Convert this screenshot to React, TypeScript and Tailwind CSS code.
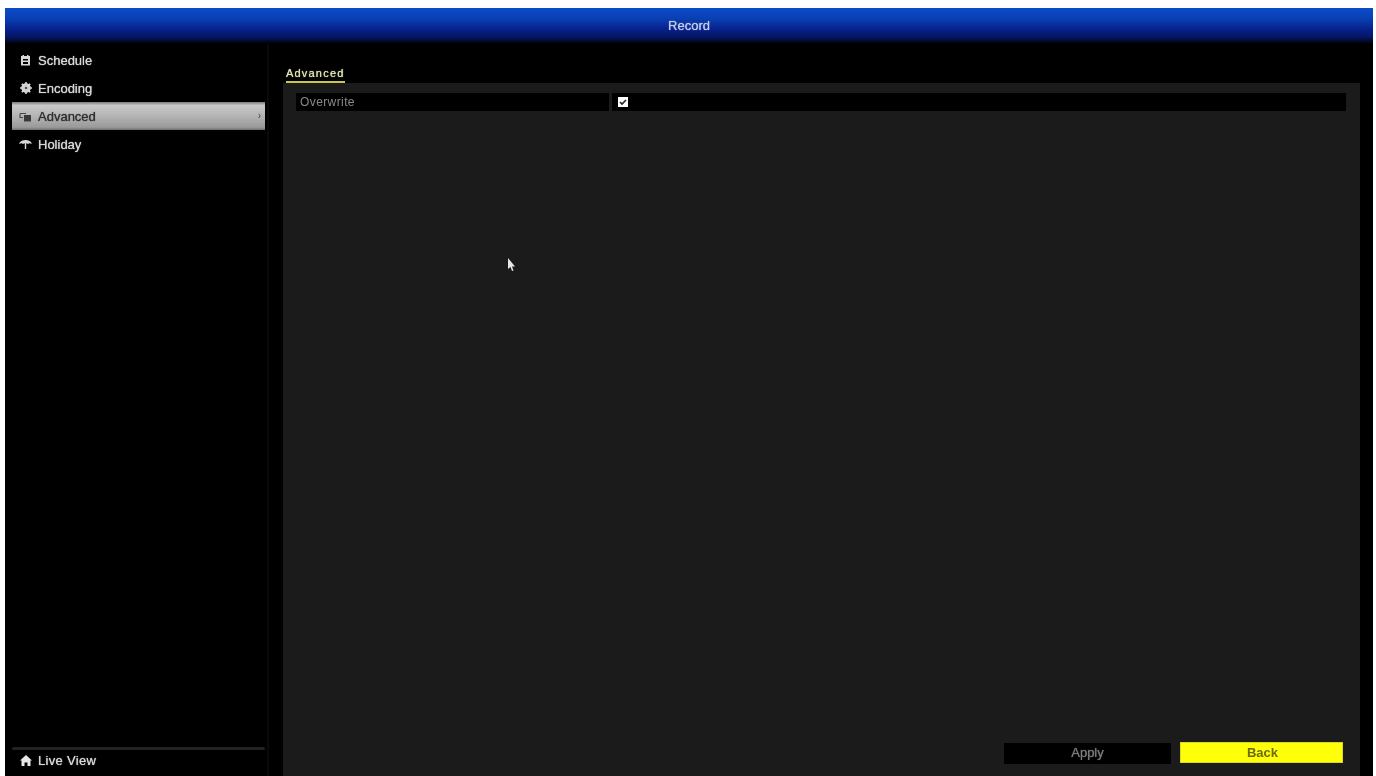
import React from "react";

const Cal = () => (
  <svg width="11" height="11" viewBox="0 0 11 11" className="shrink-0"><path fill="#d8d8d8" fillRule="evenodd" d="M1 1h1.500V0h1.500v1h3V0h1.500v1H10v9.500H1zM3 4v1.500h5V4zM3 7v2h5V7z" /></svg>
);
const Gear = () => (
  <svg width="12" height="12" viewBox="0 0 12 12" className="shrink-0"><circle cx="6" cy="6" r="3.600" fill="none" stroke="#d8d8d8" strokeWidth="2.400" /><path stroke="#d8d8d8" strokeWidth="1.600" d="M6 0v12M0 6h12M1.800 1.800l8.400 8.400M10.200 1.800l-8.400 8.400" /><circle cx="6" cy="6" r="1.300" fill="#555" /></svg>
);
const Adv = () => (
  <svg width="14" height="11" viewBox="0 0 14 11" className="shrink-0"><path fill="none" stroke="#4a4a4a" strokeWidth="1.200" d="M1 2.500h6M1 2.500v4h3" /><rect x="5" y="4" width="7" height="6.500" fill="#3a3a3a" /></svg>
);
const Umb = () => (
  <svg width="13" height="11" viewBox="0 0 13 11" className="shrink-0"><path fill="#d8d8d8" d="M0 5C1 2 3.500 1 6.500 1S12 2 13 5C11 4 10 4 9 5 8 4 5 4 4 5 3 4 2 4 0 5z" /><path stroke="#d8d8d8" strokeWidth="1.400" d="M6.500 4v6" /></svg>
);
const Home = () => (
  <svg width="12" height="11" viewBox="0 0 12 11" className="shrink-0"><path fill="#e8e8e8" d="M6 0l6 5.500h-1.500V11H7.500V7.500h-3V11h-3V5.500H0z" /></svg>
);

const items = [
  { label: "Schedule", icon: <Cal />, h: "h-[28px]" },
  { label: "Encoding", icon: <Gear />, h: "h-[28px]" },
  { label: "Advanced", icon: <Adv />, active: true, h: "h-[28px]" },
  { label: "Holiday", icon: <Umb />, h: "h-[29px]" },
];

export default function App() {
  return (
    <div className="h-[776px] w-[1376px] overflow-hidden bg-white pt-2 pl-[5px] pr-[3px] font-['Liberation_Sans',Arial,sans-serif] blur-[0.6px]">
      <div className="relative flex h-[768px] flex-col bg-black">
        <div className="flex h-[36px] shrink-0 items-center justify-center bg-[linear-gradient(to_bottom,#0b4ccb_0%,#0a3fb2_30%,#06208a_60%,#041560_82%,#000_100%)] text-[13px] text-[#c4cce8] [text-shadow:0_0_1px_#c4cce8]">
          Record
        </div>
        <div className="flex min-h-0 flex-1">
          <aside className="flex w-[264px] shrink-0 flex-col border-r-2 border-[#090909] pl-[7px] pt-[2px] pb-[6px]">
            <div className="flex flex-col">
              {items.map((it) => (
                <div key={it.label} className={`flex w-[253px] items-center ${it.h} ${it.active ? "bg-[linear-gradient(to_bottom,#7a7a7a_0%,#c9c9c9_12%,#b4b4b4_50%,#9a9a9a_90%,#6f6f6f_100%)] text-[#2e2e2e]" : "text-[#d8d8d8]"}`}>
                  <span className="flex w-[26px] shrink-0 justify-center pl-[1px]">{it.icon}</span>
                  <span className="text-[13px] leading-none [text-shadow:0_0_1px_currentColor]">{it.label}</span>
                  {it.active && <span className="ml-auto pr-[4px] text-[10px] leading-none text-[#444]">›</span>}
                </div>
              ))}
            </div>
            <div className="mt-auto flex w-[253px] flex-col">
              <div className="h-[3px] rounded-sm bg-[#222222]" />
              <div className="flex h-[20px] items-center text-[#d8d8d8]">
                <span className="flex w-[26px] shrink-0 justify-center pl-[1px]"><Home /></span>
                <span className="text-[13px] leading-none tracking-[0.3px] [text-shadow:0_0_1px_currentColor]">Live View</span>
              </div>
            </div>
          </aside>
          <main className="ml-[14px] flex w-[1077px] min-w-0 shrink-0 flex-col">
            <div className="flex h-[39px] shrink-0 items-end pl-[3px]">
              <span className="border-b-2 border-[#c8c850] pb-[1px] text-[11px] leading-[14px] tracking-[1.2px] text-[#e4e4b8] [text-shadow:0_0_1px_#e4e4b8]">Advanced</span>
            </div>
            <div className="flex min-h-0 flex-1 flex-col bg-[#1b1b1b] pl-[13px] pr-[14px] pt-[10px] pb-[12px]">
              <div className="flex h-[18px] shrink-0 gap-[3px]">
                <div className="flex w-[313px] items-center bg-black pl-[4px] text-[12px] tracking-[0.4px] text-[#8a8a8a]">Overwrite</div>
                <div className="flex flex-1 items-center bg-black pl-[6px]">
                  <span className="flex h-[10px] w-[10px] items-center justify-center bg-white">
                    <svg width="8" height="8" viewBox="0 0 8 8"><path d="M1 4l2 2 4-4" fill="none" stroke="#222" strokeWidth="1.600" /></svg>
                  </span>
                </div>
              </div>
              <div className="mt-auto flex items-center justify-end gap-[9px] pr-[3px]">
                <button className="mt-[1px] h-[21px] w-[167px] bg-black pb-[2px] text-[13px] text-[#7c7c7c] [text-shadow:0_0_1px_#7c7c7c]">Apply</button>
                <button className="mb-[1px] h-[21px] w-[163px] border border-[#d8d820] bg-[#ffff0a] pl-[2px] text-[13px] font-bold text-[#6a6a14]">Back</button>
              </div>
            </div>
          </main>
        </div>
        <svg width="8" height="14" viewBox="0 0 8 14" className="absolute left-[502px] top-[250px]"><path fill="#e6e6e6" d="M1 0v11l2.500-2 1.500 4 1.500-.6L5 8.500h3z" /></svg>
      </div>
    </div>
  );
}
